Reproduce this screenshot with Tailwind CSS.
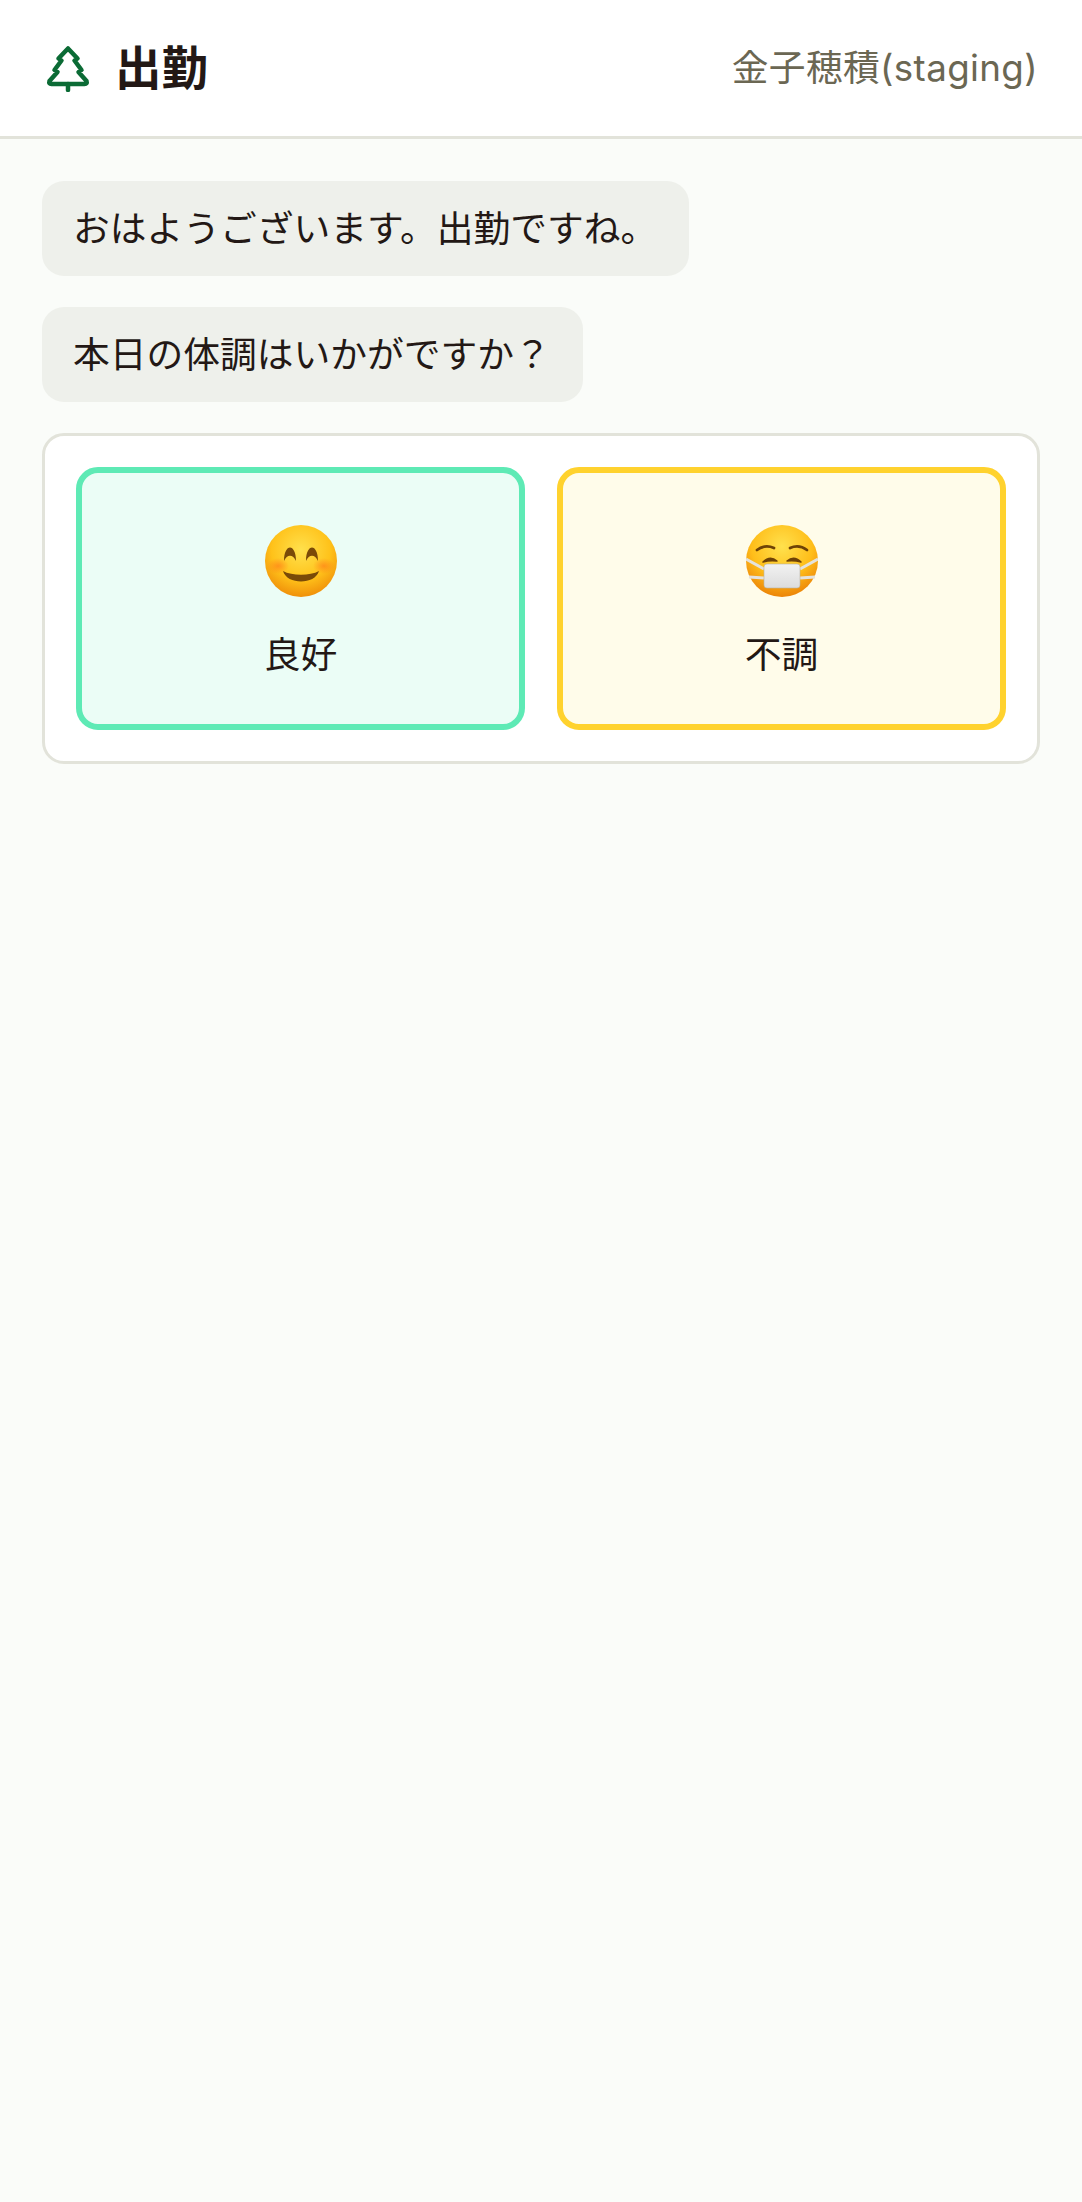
<!DOCTYPE html>
<html lang="ja">
<head>
  <meta charset="UTF-8">
  <title>出勤</title>
  <script src="https://cdn.jsdelivr.net/npm/@tailwindcss/browser@4"></script>
</head>
<body class="min-h-screen bg-[#fafcf9] text-[#231815] font-['Inter','Noto_Sans_CJK_JP',sans-serif]">

  <!-- header -->
  <header class="h-[139px] bg-white border-b-[3px] border-[#e2e3da] flex items-center justify-between pl-[46px] pr-[44px]">
    <div class="flex items-center gap-[25px]">
      <svg class="w-[44px] h-[48px]" viewBox="0 0 44 48" fill="none" stroke="#0b6b35" stroke-width="4.500" stroke-linecap="round" stroke-linejoin="round">
        <path d="M22 4.500 L31.500 14.500 L28.500 16.500 L35.500 26 L32.500 28 L40.500 37 Q41.500 40 38.500 40 L5.500 40 Q2.500 40 3.500 37 L11.500 28 L8.500 26 L15.500 16.500 L12.500 14.500 Z"/>
        <path d="M22 40 V46"/>
      </svg>
      <h1 class="text-[46.500px] leading-none font-bold">出勤</h1>
    </div>
    <span class="text-[36.750px] leading-none tracking-[0.35px] text-[#6b6753] whitespace-nowrap">金子穂積(staging)</span>
  </header>

  <main class="px-[42px] pt-[42px] flex flex-col items-start gap-[31px]">
    <div class="bg-[#eef0eb] rounded-[22px] pl-[31px] pr-[32px] h-[95px] flex items-center text-[36.750px] whitespace-nowrap">おはようございます。出勤ですね。</div>
    <div class="bg-[#eef0eb] rounded-[22px] pl-[31px] pr-[32px] h-[95px] flex items-center text-[36.750px] whitespace-nowrap">本日の体調はいかがですか？</div>

    <div class="w-full bg-white border-[3px] border-[#e2e3da] rounded-[22px] p-[31px] grid grid-cols-2 gap-[32px]">
      <!-- good -->
      <button class="h-[263px] bg-[#ebfdf6] border-[6px] border-[#5eeab5] rounded-[22px] flex flex-col items-center pt-[52px]">
        <svg class="w-[72px] h-[72px]" viewBox="0 0 72 72">
          <defs>
            <radialGradient id="faceA" cx="50%" cy="35%" r="68%">
              <stop offset="0" stop-color="#ffe14d"/>
              <stop offset="0.6" stop-color="#ffc21a"/>
              <stop offset="1" stop-color="#ee8a08"/>
            </radialGradient>
            <radialGradient id="blushA">
              <stop offset="0" stop-color="#ff7a1a" stop-opacity="0.65"/>
              <stop offset="1" stop-color="#ff7a1a" stop-opacity="0"/>
            </radialGradient>
          </defs>
          <circle cx="36" cy="36" r="36" fill="url(#faceA)"/>
          <ellipse cx="13" cy="41" rx="11" ry="8" fill="url(#blushA)"/>
          <ellipse cx="59" cy="41" rx="11" ry="8" fill="url(#blushA)"/>
          <path d="M19 36 C19 18 31 18 31 36 C28 29 22 29 19 36 Z" fill="#7a4a08"/>
          <path d="M41 36 C41 18 53 18 53 36 C50 29 44 29 41 36 Z" fill="#7a4a08"/>
          <path d="M18 46 C27 51 45 51 54 46 C50 60 22 60 18 46 Z" fill="#7a4a08"/>
        </svg>
        <span class="mt-[31px] text-[36.750px] leading-[54px]">良好</span>
      </button>
      <!-- bad -->
      <button class="h-[263px] bg-[#fffcea] border-[6px] border-[#ffd22e] rounded-[22px] flex flex-col items-center pt-[52px]">
        <svg class="w-[72px] h-[72px]" viewBox="0 0 72 72">
          <defs>
            <radialGradient id="faceB" cx="50%" cy="30%" r="70%">
              <stop offset="0" stop-color="#ffe14d"/>
              <stop offset="0.6" stop-color="#ffbe1a"/>
              <stop offset="1" stop-color="#ec8408"/>
            </radialGradient>
            <linearGradient id="maskB" x1="0" y1="0" x2="0" y2="1">
              <stop offset="0" stop-color="#f2f2f2"/>
              <stop offset="1" stop-color="#dcdcdc"/>
            </linearGradient>
          </defs>
          <circle cx="36" cy="36" r="36" fill="url(#faceB)"/>
          <path d="M11 25 Q19 19 28 23" fill="none" stroke="#6e4206" stroke-width="2.800" stroke-linecap="round"/>
          <path d="M44 23 Q53 19 61 25" fill="none" stroke="#6e4206" stroke-width="2.800" stroke-linecap="round"/>
          <path d="M17 37 Q24 30 31 36 Q24 35 17 37 Z" fill="#6e4206" stroke="#6e4206" stroke-width="1.500" stroke-linejoin="round"/>
          <path d="M41 36 Q48 30 55 37 Q48 35 41 36 Z" fill="#6e4206" stroke="#6e4206" stroke-width="1.500" stroke-linejoin="round"/>
          <path d="M0 34 L18 44 M72 34 L54 44 M3 52 L18 53 M69 52 L54 53" stroke="#e4e2dc" stroke-width="3"/>
          <rect x="18" y="39" width="36" height="24" rx="3" fill="url(#maskB)" stroke="#b9b3a6" stroke-width="0.600"/>
        </svg>
        <span class="mt-[31px] text-[36.750px] leading-[54px]">不調</span>
      </button>
    </div>
  </main>
</body>
</html>
